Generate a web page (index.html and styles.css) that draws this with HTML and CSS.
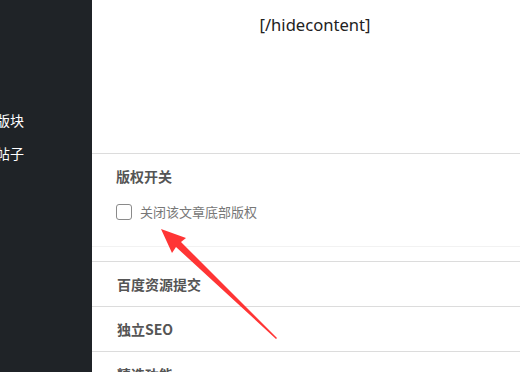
FILE: index.html
```html
<!DOCTYPE html>
<html lang="zh-CN">
<head>
<meta charset="utf-8">
<link rel="stylesheet" href="styles.css">
</head>
<body>
<div class="page">
  <aside class="sidebar">
    <div class="nav-item">版块</div>
    <div class="nav-item">帖子</div>
  </aside>
  <main class="main">
    <div class="content">[/hidecontent]</div>
    <section class="panel">
      <div class="panel-title">版权开关</div>
      <label class="check-row"><span class="checkbox"></span><span class="check-label">关闭该文章底部版权</span></label>
    </section>
    <div class="row">百度资源提交</div>
    <div class="row">独立SEO</div>
    <div class="row">精选功能</div>
  </main>
</div>
<svg class="arrow" width="520" height="372" viewBox="0 0 520 372">
  <polygon fill="#ff3535" points="161,229 186,238 181,242 277,338 276,339 176,247 172,253"/>
</svg>
</body>
</html>
```
FILE: styles.css
```css
html, body {
  margin: 0;
  padding: 0;
  width: 520px;
  height: 372px;
  overflow: hidden;
  background: #fff;
}
.page {
  display: flex;
  height: 372px;
  font-family: "Noto Sans", "Noto Sans CJK SC", sans-serif;
}
.sidebar {
  width: 92px;
  flex: none;
  background: #1f2327;
  overflow: hidden;
  padding-top: 110px;
  box-sizing: border-box;
}
.nav-item {
  color: #fff;
  font-size: 14px;
  line-height: 20px;
  margin-left: -4px;
  margin-bottom: 13px;
  font-family: "Noto Sans CJK SC", sans-serif;
}
.main {
  flex: 1;
  overflow: hidden;
}
.content {
  height: 154px;
  box-sizing: border-box;
  padding-top: 14px;
  padding-left: 18px;
  text-align: center;
  font-size: 16.6px;
  line-height: 22px;
  color: #222;
  border-bottom: 1px solid #dcdcdc;
}
.panel {
  height: 93px;
  box-sizing: border-box;
  padding: 12px 0 0 24px;
  border-bottom: 1px solid #f2f2f2;
  margin-bottom: 14px;
}
.panel-title {
  font-family: "Noto Sans CJK SC", sans-serif;
  font-size: 14px;
  line-height: 20px;
  font-weight: 700;
  color: #555;
}
.check-row {
  display: flex;
  align-items: center;
  margin-top: 18px;
  height: 16px;
}
.checkbox {
  width: 14px;
  height: 14px;
  border: 1px solid #8a8a8a;
  border-radius: 3px;
  background: #fff;
  margin-right: 8px;
}
.check-label {
  font-family: "Noto Sans CJK SC", sans-serif;
  font-size: 13px;
  color: #777;
  line-height: 16px;
}
.row {
  height: 45px;
  box-sizing: border-box;
  border-top: 1px solid #dcdcdc;
  padding-left: 25px;
  display: flex;
  align-items: center;
  font-family: "Noto Sans CJK SC", sans-serif;
  font-size: 14px;
  font-weight: 700;
  color: #555;
}
.arrow {
  position: absolute;
  left: 0;
  top: 0;
  pointer-events: none;
}
```
